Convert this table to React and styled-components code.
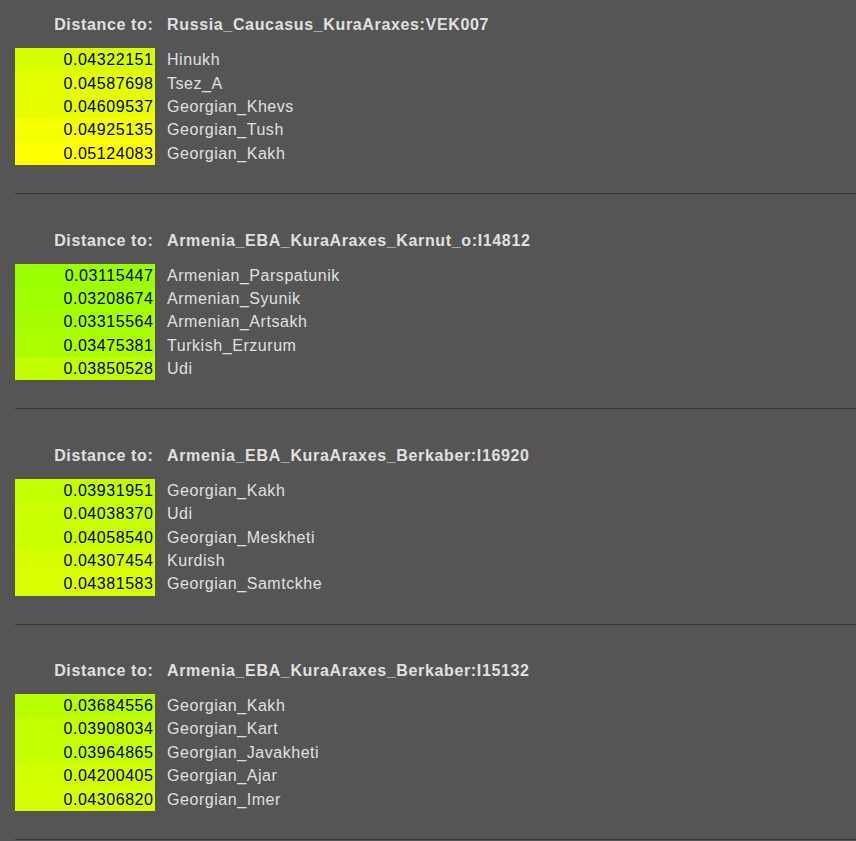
import styled, { createGlobalStyle } from "styled-components";

const GlobalStyle = createGlobalStyle`
  html, body {
    margin: 0;
    padding: 0;
    background: #555555;
  }
  body {
    font-family: "Liberation Sans", Arial, sans-serif;
    font-size: 16px;
    letter-spacing: 0.55px;
    color: #e0e0e0;
  }
`;

const results = [
  {
    target: "Russia_Caucasus_KuraAraxes:VEK007",
    rows: [
      ["0.04322151", "Hinukh"],
      ["0.04587698", "Tsez_A"],
      ["0.04609537", "Georgian_Khevs"],
      ["0.04925135", "Georgian_Tush"],
      ["0.05124083", "Georgian_Kakh"],
    ],
  },
  {
    target: "Armenia_EBA_KuraAraxes_Karnut_o:I14812",
    rows: [
      ["0.03115447", "Armenian_Parspatunik"],
      ["0.03208674", "Armenian_Syunik"],
      ["0.03315564", "Armenian_Artsakh"],
      ["0.03475381", "Turkish_Erzurum"],
      ["0.03850528", "Udi"],
    ],
  },
  {
    target: "Armenia_EBA_KuraAraxes_Berkaber:I16920",
    rows: [
      ["0.03931951", "Georgian_Kakh"],
      ["0.04038370", "Udi"],
      ["0.04058540", "Georgian_Meskheti"],
      ["0.04307454", "Kurdish"],
      ["0.04381583", "Georgian_Samtckhe"],
    ],
  },
  {
    target: "Armenia_EBA_KuraAraxes_Berkaber:I15132",
    rows: [
      ["0.03684556", "Georgian_Kakh"],
      ["0.03908034", "Georgian_Kart"],
      ["0.03964865", "Georgian_Javakheti"],
      ["0.04200405", "Georgian_Ajar"],
      ["0.04306820", "Georgian_Imer"],
    ],
  },
];

// green -> yellow scale, red channel grows with distance
const distanceColor = (value) => {
  const r = Math.min(255, Math.round(parseFloat(value) * 4980));
  return `rgb(${r}, 255, 0)`;
};

const Page = styled.div`
  min-height: 100vh;
  padding-left: 15px;
`;

const Section = styled.section`
  padding-top: ${(p) => (p.$first ? "16.4px" : "37.4px")};
`;

const Grid = styled.div`
  display: grid;
  grid-template-columns: 140px 1fr;
  column-gap: 12px;
`;

const Header = styled(Grid)`
  font-weight: bold;
  line-height: 18px;
  letter-spacing: 0.65px;
  margin-bottom: 13.9px;
`;

const HeaderLabel = styled.div`
  text-align: right;
  padding-right: 1.5px;
`;

const Row = styled(Grid)`
  height: 23.4px;
  line-height: 23.4px;
`;

const Distance = styled.div`
  background: ${(p) => p.$color};
  color: #000;
  text-align: right;
  padding-right: 1.5px;
`;

const Population = styled.div`
  white-space: nowrap;
`;

const Divider = styled.hr`
  margin: 28px 0 0;
  border: 0;
  border-top: 1px solid #363636;
  height: 0;
`;

const App = () => {
  return (
    <Page>
      <GlobalStyle />
      {results.map((block, i) => (
        <Section key={block.target} $first={i === 0}>
          <Header>
            <HeaderLabel>Distance to:</HeaderLabel>
            <div>{block.target}</div>
          </Header>
          {block.rows.map(([dist, name]) => (
            <Row key={name}>
              <Distance $color={distanceColor(dist)}>{dist}</Distance>
              <Population>{name}</Population>
            </Row>
          ))}
          <Divider />
        </Section>
      ))}
    </Page>
  );
};

export default App;
